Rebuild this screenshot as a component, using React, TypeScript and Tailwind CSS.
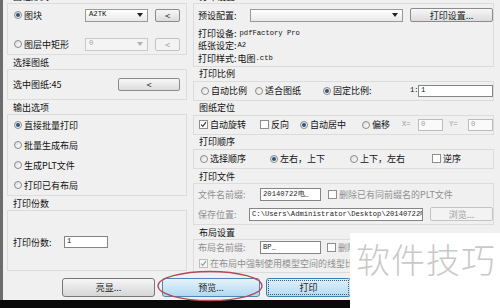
import React from "react";

const T = "text-[9px] leading-none whitespace-nowrap";
const MONO = "font-['Liberation_Mono',monospace] text-[7.2px] leading-none whitespace-nowrap";
const BOX = "border border-[#dcdcdc]";

function Radio({ checked = false, disabled = false }: { checked?: boolean; disabled?: boolean }) {
  return (
    <span
      className={`flex w-[8px] h-[8px] shrink-0 rounded-full border items-center justify-center ${
        disabled ? "border-[#c6c6c6] bg-[#f5f5f5]" : "border-[#8a8a8a] bg-gradient-to-br from-[#dcdcdc] to-white"
      }`}
    >
      {checked && <span className="w-[4px] h-[4px] rounded-full bg-[#2d5283]" />}
    </span>
  );
}

function Check({ checked = false, disabled = false }: { checked?: boolean; disabled?: boolean }) {
  return (
    <span
      className={`flex w-[9px] h-[9px] shrink-0 border items-center justify-center ${
        disabled ? "border-[#bdbdbd] bg-[#f7f7f7]" : "border-[#8e8e8e] bg-white"
      }`}
    >
      {checked && (
        <svg width="7" height="7" viewBox="0 0 7 7">
          <path d="M1 3.6 L2.8 5.4 L6 1.2" stroke={disabled ? "#9a9a9a" : "#3b3b3b"} strokeWidth="1.2" fill="none" />
        </svg>
      )}
    </span>
  );
}

function Btn({ children, w, disabled = false, h = "h-[13px]" }: { children: React.ReactNode; w: string; disabled?: boolean; h?: string }) {
  return (
    <div
      className={`${w} ${h} shrink-0 flex items-center justify-center rounded-[2px] border ${T} ${
        disabled
          ? "border-[#c3c3c3] bg-[#f3f3f3] text-[#9c9c9c]"
          : "border-[#8b8b8b] bg-gradient-to-b from-[#f7f7f7] to-[#dcdcdc] text-[#222]"
      }`}
    >
      {children}
    </div>
  );
}

function Combo({ w, text, disabled = false }: { w: string; text: string; disabled?: boolean }) {
  return (
    <div
      className={`${w} h-[13px] shrink-0 flex items-center justify-between border pl-[3px] pr-[4px] ${
        disabled ? "border-[#c8c8c8] bg-[#f4f4f4] text-[#a5a5a5]" : "border-[#9a9a9a] bg-gradient-to-b from-white to-[#e9e9e9] text-[#111]"
      }`}
    >
      <span className={MONO}>{text}</span>
      <svg width="6" height="4" viewBox="0 0 6 4">
        <path d="M0 0 L6 0 L3 4 Z" fill={disabled ? "#b0b0b0" : "#222"} />
      </svg>
    </div>
  );
}

function Input({ w, text, disabled = false, h = "h-[13px]" }: { w: string; text: string; disabled?: boolean; h?: string }) {
  return (
    <div
      className={`${w} ${h} shrink-0 flex items-center border pl-[2px] overflow-hidden ${
        disabled ? "border-[#bcbcbc] bg-[#fafafa] text-[#a0a0a0]" : "border-[#858585] bg-white text-[#222]"
      }`}
    >
      <span className={MONO}>{text}</span>
    </div>
  );
}

function Label({ children }: { children: React.ReactNode }) {
  return <div className={`h-[14px] shrink-0 flex items-center pl-[6px] ${T} text-[#111]`}>{children}</div>;
}

function Opt({ children, w, radio = true, checked = false, disabled = false, gray = false }: { children: React.ReactNode; w?: string; radio?: boolean; checked?: boolean; disabled?: boolean; gray?: boolean }) {
  return (
    <div className={`${w ?? ""} shrink-0 flex items-center gap-[2px]`}>
      {radio ? <Radio checked={checked} disabled={disabled} /> : <Check checked={checked} disabled={disabled} />}
      <span className={`${T} ${gray ? "text-[#8f8f8f]" : "text-[#111]"}`}>{children}</span>
    </div>
  );
}

export default function App() {
  return (
    <div className="w-[500px] h-[308px] relative overflow-hidden bg-[#0a0a0a] flex flex-col font-['Noto_Sans_CJK_SC',sans-serif]">
      <div className="h-[300px] flex shrink-0">
        <div className="w-[3px] bg-[#6c6c6c] shrink-0" />
        <div className="flex-1 bg-[#f0f0f0] flex flex-col overflow-hidden">
          {/* columns */}
          <div className="flex mt-[-11px] h-[284px] shrink-0">
            {/* left column */}
            <div className="w-[180px] ml-[4px] flex flex-col shrink-0">
              <Label>图框形式</Label>
              <div className={`${BOX} h-[52px] pt-[4px] pl-[6px] flex flex-col`}>
                <div className="h-[14px] flex items-center">
                  <div className="w-[71px] shrink-0">
                    <Opt checked>图块</Opt>
                  </div>
                  <Combo w="w-[63px]" text="A2TK" />
                  <div className="w-[7px]" />
                  <Btn w="w-[25px]">&lt;</Btn>
                </div>
                <div className="h-[14px] mt-[15px] flex items-center">
                  <div className="w-[71px] shrink-0">
                    <Opt>图层中矩形</Opt>
                  </div>
                  <Combo w="w-[63px]" text="0" disabled />
                  <div className="w-[7px]" />
                  <Btn w="w-[25px]" disabled>&lt;</Btn>
                </div>
              </div>
              <Label>选择图纸</Label>
              <div className={`${BOX} h-[31px] pt-[7px] pl-[5px]`}>
                <div className="h-[14px] flex items-center">
                  <span className={`${T} w-[105px] text-[#111]`}>选中图纸:45</span>
                  <Btn w="w-[62px]">&lt;</Btn>
                </div>
              </div>
              <Label>输出选项</Label>
              <div className={`${BOX} h-[82px] pl-[6px] flex flex-col`}>
                <div className="h-[20px] flex items-center">
                  <Opt checked>直接批量打印</Opt>
                </div>
                <div className="h-[20px] flex items-center">
                  <Opt>批量生成布局</Opt>
                </div>
                <div className="h-[20px] flex items-center">
                  <Opt>生成PLT文件</Opt>
                </div>
                <div className="h-[20px] flex items-center">
                  <Opt>打印已有布局</Opt>
                </div>
              </div>
              <Label>打印份数</Label>
              <div className={`${BOX} h-[61px] pt-[24px] pl-[5px]`}>
                <div className="h-[14px] flex items-center">
                  <span className={`${T} w-[51px] text-[#111]`}>打印份数:</span>
                  <Input w="w-[44px]" text="1" h="h-[12px]" />
                </div>
              </div>
            </div>

            {/* right column */}
            <div className="w-[301px] ml-[6px] flex flex-col shrink-0">
              <Label>打印设置</Label>
              <div className={`${BOX} h-[64px] pt-[4px] pl-[4px] flex flex-col`}>
                <div className="h-[14px] flex items-center">
                  <span className={`${T} w-[52px] text-[#111]`}>预设配置:</span>
                  <Combo w="w-[153px]" text="" />
                  <div className="w-[7px]" />
                  <Btn w="w-[83px]" h="h-[14px]">打印设置...</Btn>
                </div>
                <div className="h-[12.5px] mt-[5px] flex items-center">
                  <span className={`${T} text-[#111]`}>打印设备:</span>
                  <span className={`${MONO} ml-[3px] text-[#111]`}>pdfFactory Pro</span>
                </div>
                <div className="h-[12.5px] flex items-center">
                  <span className={`${T} text-[#111]`}>纸张设定:</span>
                  <span className={`${MONO} ml-[1px] text-[#111]`}>A2</span>
                </div>
                <div className="h-[12.5px] flex items-center">
                  <span className={`${T} text-[#111]`}>打印样式:</span>
                  <span className={`${T} ml-[1px] text-[#111]`}>电图</span>
                  <span className={`${MONO} text-[#111]`}>.ctb</span>
                </div>
              </div>
              <Label>打印比例</Label>
              <div className={`${BOX} h-[20px] pl-[7px] flex items-center`}>
                <Opt w="w-[54px]">自动比例</Opt>
                <Opt w="w-[68px]">适合图纸</Opt>
                <Opt w="w-[87px]" checked>固定比例:</Opt>
                <span className={`${MONO} w-[8px] text-[#111]`}>1:</span>
                <Input w="w-[75px]" text="1" h="h-[12px]" />
              </div>
              <Label>图纸定位</Label>
              <div className={`${BOX} h-[20px] pl-[5px] flex items-center`}>
                <Opt w="w-[61px]" radio={false} checked>自动旋转</Opt>
                <Opt w="w-[40px]" radio={false}>反向</Opt>
                <Opt w="w-[62px]" checked>自动居中</Opt>
                <Opt w="w-[40px]">偏移</Opt>
                <span className={`${MONO} w-[16px] text-[#a0a0a0]`}>X=</span>
                <Input w="w-[25px]" text="0" disabled h="h-[12px]" />
                <span className={`${MONO} w-[25px] pl-[6px] text-[#a0a0a0]`}>Y=</span>
                <Input w="w-[25px]" text="0" disabled h="h-[12px]" />
              </div>
              <Label>打印顺序</Label>
              <div className={`${BOX} h-[21px] pl-[6px] flex items-center`}>
                <Opt w="w-[70px]">选择顺序</Opt>
                <Opt w="w-[80px]" checked>左右，上下</Opt>
                <Opt w="w-[82px]">上下，左右</Opt>
                <Opt radio={false}>逆序</Opt>
              </div>
              <Label>打印文件</Label>
              <div className={`${BOX} h-[42px] pt-[3px] pl-[4px] flex flex-col`}>
                <div className="h-[14px] flex items-center">
                  <span className={`${T} w-[62px] text-[#8f8f8f]`}>文件名前缀:</span>
                  <Input w="w-[61px]" text="20140722电_" />
                  <div className="w-[7px]" />
                  <Opt radio={false} gray>删除已有同前缀名的PLT文件</Opt>
                </div>
                <div className="h-[14px] mt-[6px] flex items-center">
                  <span className={`${T} w-[51px] text-[#8f8f8f]`}>保存位置:</span>
                  <Input w="w-[174px]" text="C:\Users\Administrator\Desktop\20140722电" />
                  <div className="w-[7px]" />
                  <Btn w="w-[63px]" disabled h="h-[14px]">浏览...</Btn>
                </div>
              </div>
              <Label>布局设置</Label>
              <div className={`${BOX} h-[34px] pl-[4px] flex flex-col`}>
                <div className="h-[14px] flex items-center">
                  <span className={`${T} w-[62px] text-[#8f8f8f]`}>布局名前缀:</span>
                  <Input w="w-[61px]" text="BP_" />
                  <div className="w-[6px]" />
                  <Opt radio={false} gray>删除已有同前缀名的布局</Opt>
                </div>
                <div className="h-[14px] mt-[2px] pl-[1px] flex items-center">
                  <Opt radio={false} checked disabled gray>在布局中强制使用模型空间的线型比例</Opt>
                </div>
              </div>
            </div>
          </div>

          {/* buttons row */}
          <div className="flex pt-[5px] pl-[59px] h-[27px]">
            <div className={`w-[93px] h-[19px] flex items-center justify-center rounded-[3px] border border-[#777] bg-gradient-to-b from-[#f6f6f6] to-[#d6d6d6] ${T} text-[#222]`}>
              亮显...
            </div>
            <div className="w-[7px]" />
            <div className={`w-[98px] h-[19px] flex items-center justify-center rounded-[3px] border border-[#4d86b4] bg-gradient-to-b from-[#e6f3fb] to-[#b2d9f1] ${T} text-[#222]`}>
              预览...
            </div>
            <div className="w-[6px]" />
            <div className="w-[85px] h-[19px] rounded-[3px] border border-[#3c7fb1] bg-gradient-to-b from-[#dff0fb] to-[#b5dbf3] p-[1px]">
              <div className={`w-full h-full flex items-center justify-center border border-dotted border-[#3a5a78] ${T} text-[#222]`}>
                打印
              </div>
            </div>
          </div>
        </div>
      </div>
      <div className="flex-1 bg-[#0a0a0a]" />

      {/* red ellipse annotation */}
      <svg className="absolute left-[155px] top-[270px]" width="110" height="34" viewBox="0 0 110 34">
        <ellipse cx="55" cy="16" rx="52" ry="14.5" fill="none" stroke="#b04a5a" strokeWidth="1.3" />
      </svg>

      {/* watermark */}
      <div className="absolute left-[350px] top-[233px] w-[150px] h-[75px] bg-white pl-[6px] pt-[9px]">
        <span className="text-[34px] leading-none font-light text-[#c9c9c9] whitespace-nowrap tracking-[1px]">软件技巧</span>
      </div>
    </div>
  );
}
